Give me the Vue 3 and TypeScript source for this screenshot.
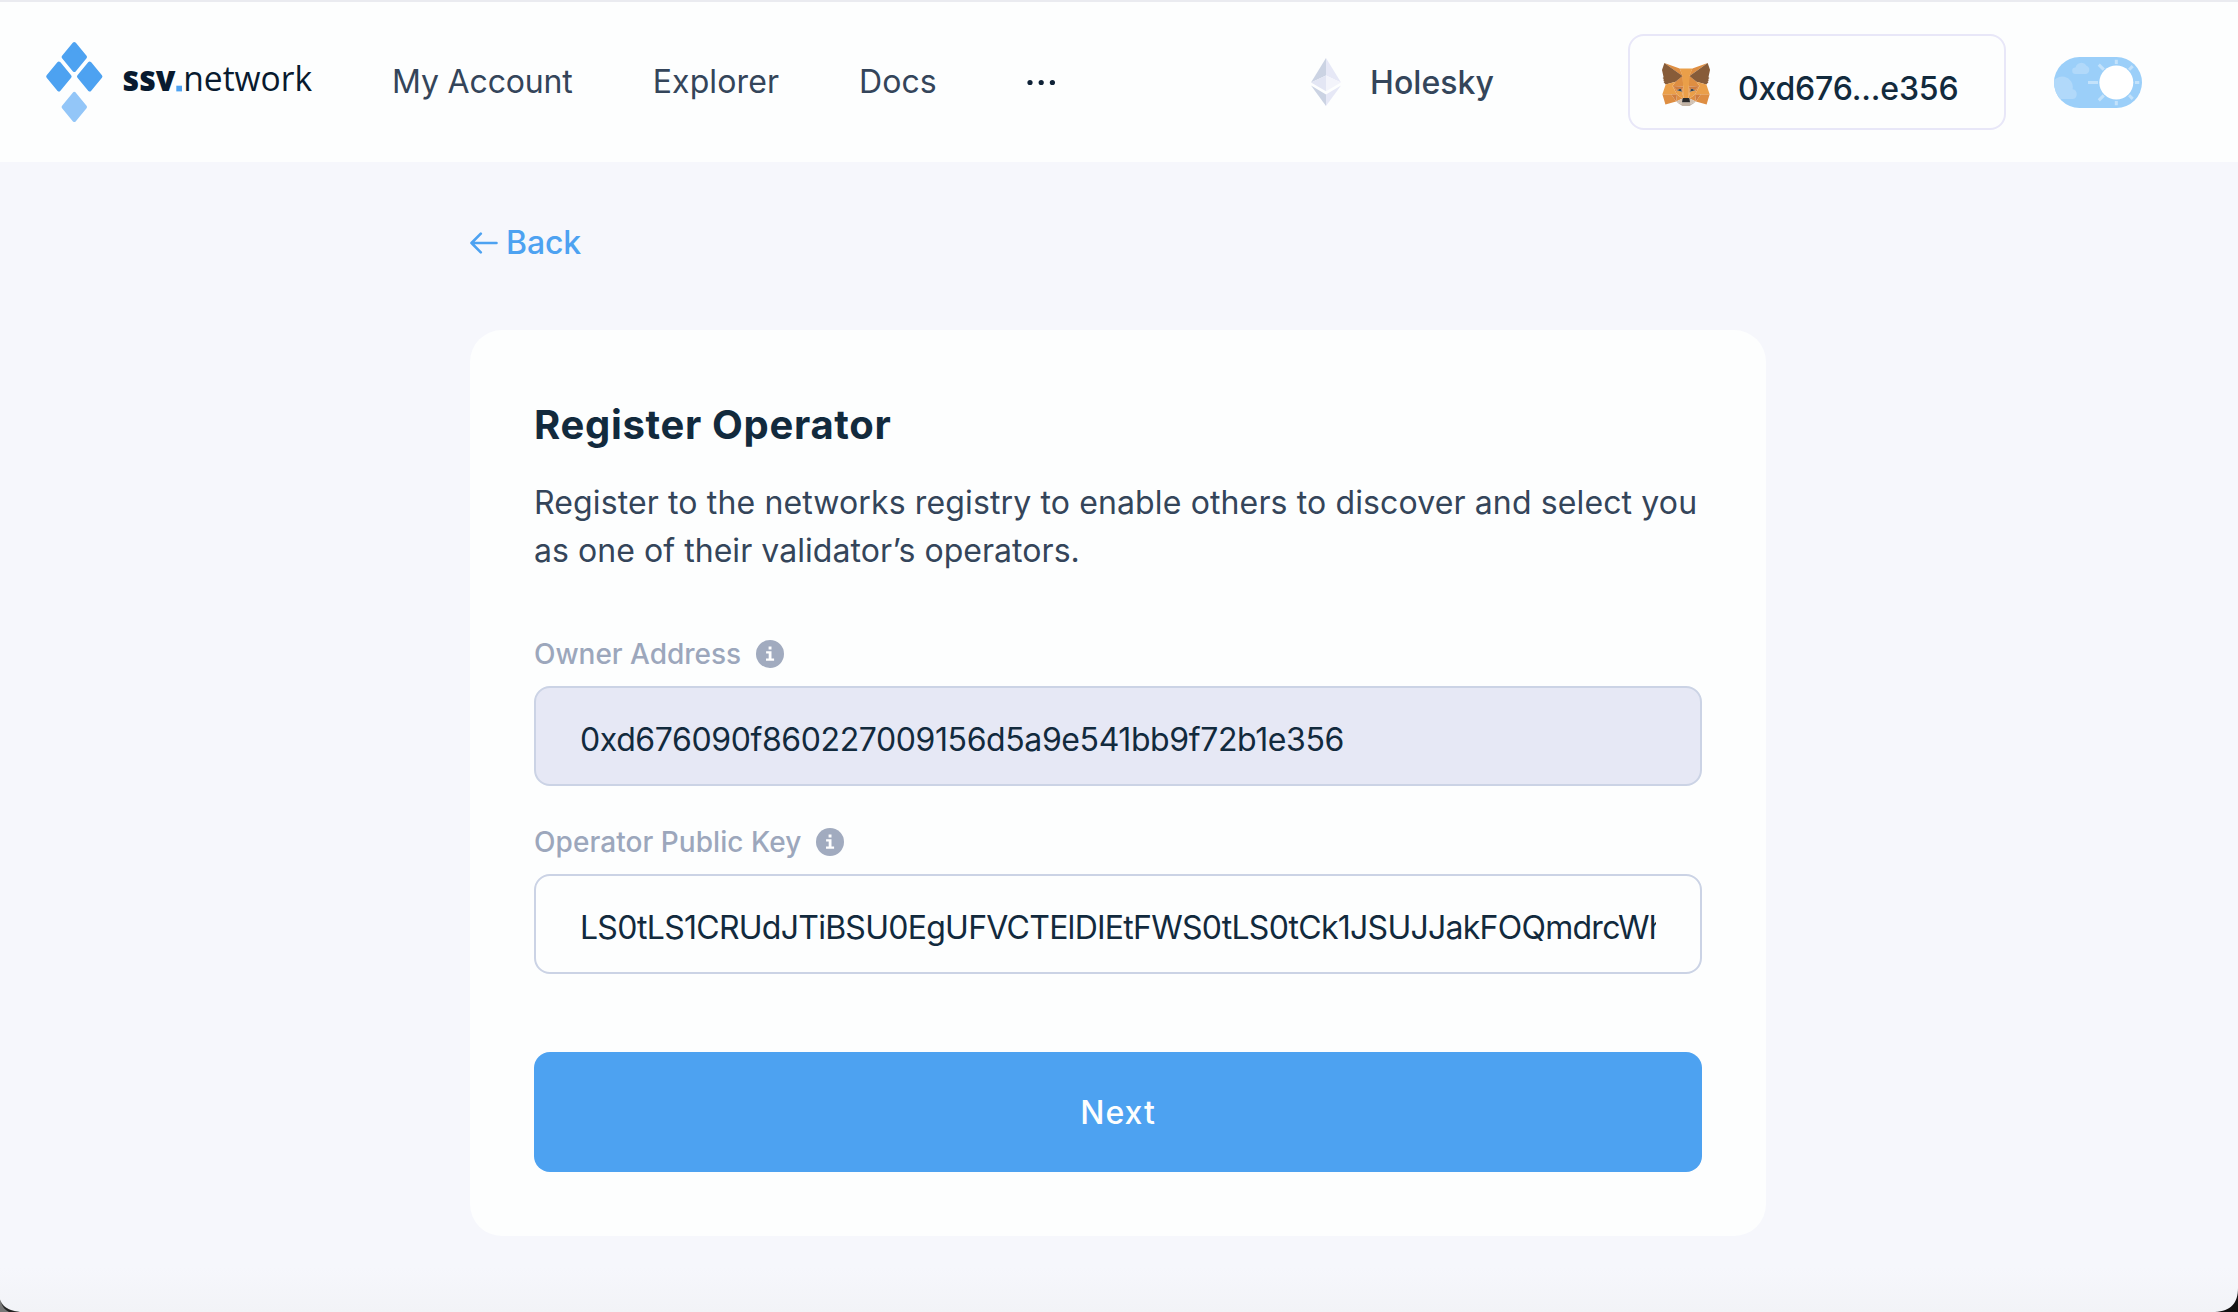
<script setup lang="ts">
import { ref } from 'vue'

interface Shape { d: string; fill: string }

const navItems: { label: string; spacing: string }[] = [
  { label: 'My Account', spacing: '-0.15px' },
  { label: 'Explorer', spacing: '0.12px' },
  { label: 'Docs', spacing: '0.05px' },
]

const ownerAddress = ref('0xd676090f860227009156d5a9e541bb9f72b1e356')
const publicKey = ref('LS0tLS1CRUdJTiBSU0EgUFVCTElDIEtFWS0tLS0tCk1JSUJJakFOQmdrcWhraUc5dzBCQVFFRkFBT0NBUThB')

const fox: Shape[] = [
  { fill: '#de8e42', d: 'M32.96 1l-13.14 9.72 2.45-5.73L32.96 1z M2.66 1l13.02 9.81L13.35 4.99 2.66 1z M28.23 23.53l-3.49 5.34 7.48 2.06 2.14-7.28-6.13-.12z M1.27 23.65l2.13 7.28 7.47-2.06-3.48-5.34-6.12.12z M10.47 14.51l-2.08 3.14 7.4.34-.25-7.97-5.07 4.49z M25.15 14.51l-5.16-4.58-.17 8.06 7.4-.34-2.07-3.14z M10.87 28.87l4.49-2.16-3.86-3.01-.63 5.17z M20.27 26.71l4.46 2.16-.61-5.17-3.85 3.01z' },
  { fill: '#d3c3b4', d: 'M24.73 28.87l-4.46-2.16.36 2.9-.04 1.23 4.14-1.97z M10.87 28.87l4.16 1.97-.03-1.23.36-2.9-4.49 2.16z' },
  { fill: '#cf7d3f', d: 'M10.87 28.87l.65-5.34-4.13.12 3.48 5.22z M24.1 23.53l.63 5.34 3.49-5.22-4.12-.12z M27.22 17.65l-7.4.34.69 3.79 1.1-2.3 2.65 1.21 2.96-3.04z M11.38 20.69l2.63-1.21 1.1 2.3.69-3.79-7.4-.34 2.98 3.04z' },
  { fill: '#de8a3e', d: 'M8.4 17.65l3.1 6.05-.1-3.01-3-3.04z M24.26 20.69l-.12 3.01 3.1-6.05-2.98 3.04z M15.8 17.99l-.69 3.79.87 4.48.19-5.9-.37-2.37z M19.82 17.99l-.36 2.36.18 5.91.87-4.48-.69-3.79z' },
  { fill: '#ea9f49', d: 'M20.51 21.78l-.87 4.48.63.45 3.85-3.01.12-3.01-3.73 1.09z M11.38 20.69l.12 3.01 3.86 3.01.63-.45-.88-4.48-3.73-1.09z' },
  { fill: '#c2b3a4', d: 'M20.59 30.84l.04-1.23-.34-.28h-4.96l-.32.28.03 1.23-4.16-1.97 1.46 1.19 2.95 2.03h5.06l2.96-2.03 1.43-1.19-4.14 1.97z' },
  { fill: '#2b2b2b', d: 'M20.27 26.71l-.63-.45h-3.65l-.63.45-.36 2.9.32-.28h4.96l.34.28-.35-2.9z' },
  { fill: '#875c39', d: 'M33.52 11.35l1.1-5.36L32.96 1l-12.69 9.4 4.89 4.11 6.9 2 1.52-1.77-.66-.48 1.05-.96-.81-.62 1.05-.8-.69-.53z M1 5.99l1.12 5.36-.72.53 1.07.8-.8.62 1.05.96-.66.48 1.51 1.77 6.9-2 4.89-4.11L2.66 1 1 5.99z' },
  { fill: '#ea9f49', d: 'M32.06 16.52l-6.9-2 2.08 3.14-3.1 6.05 4.1-.05h6.12l-2.3-7.14z M10.47 14.52l-6.9 2-2.3 7.14h6.11l4.1.05-3.1-6.05 2.09-3.14z M19.82 17.99l.43-7.6 2.01-5.4h-8.91l1.99 5.4.46 7.6.16 2.38.02 5.89h3.65l.03-5.89.16-2.38z' },
  { fill: '#35424e', d: 'M15.11 21.78l-3.73-1.09 2.63-1.21 1.1 2.3z M20.51 21.78l1.1-2.3 2.65 1.21-3.75 1.09z' },
]
</script>

<template>
  <div class="page">
    <header class="header">
      <svg class="logo" width="270" height="80" viewBox="0 0 270 80" role="img" aria-label="ssv.network">
        <g fill="#4da2f1" stroke="#4da2f1" stroke-width="4" stroke-linejoin="round">
          <path d="M28.3 2 39 15 28.3 28 17.600 15z" />
          <path d="M12.900 21.500 23.600 34.500 12.900 47.500 2.200 34.500z" />
          <path d="M43.700 21.500 54.400 34.500 43.700 47.500 33 34.500z" />
        </g>
        <path d="M28.3 51.9 39 64.9 28.3 77.9 17.600 64.9z" fill="#93c6f8" stroke="#93c6f8" stroke-width="4" stroke-linejoin="round" />
        <text class="logo-bold" x="76.5" y="49" textLength="53" lengthAdjust="spacingAndGlyphs">ssv</text>
        <rect x="130.3" y="43.7" width="5.700" height="5.700" fill="#4da2f1" />
        <text class="logo-light" x="137.2" y="49" textLength="129" lengthAdjust="spacingAndGlyphs">network</text>
      </svg>

      <nav class="nav">
        <a v-for="item in navItems" :key="item.label" :style="{ letterSpacing: item.spacing }">{{ item.label }}</a>
        <svg width="48" height="48" viewBox="0 0 48 48" fill="#0f2237">
          <circle cx="13" cy="24.500" r="2.600" />
          <circle cx="24.200" cy="24.500" r="2.600" />
          <circle cx="35.400" cy="24.500" r="2.600" />
        </svg>
      </nav>

      <div class="chain">
        <svg width="30" height="48" viewBox="0 0 30 48">
          <path d="M15 0 0 24.5 15 17.5z" fill="#cbd3e3" />
          <path d="M15 0 30 24.5 15 17.5z" fill="#e6e8f6" />
          <path d="M0 24.5 15 17.5V33.3z" fill="#e3e6f4" />
          <path d="M30 24.5 15 17.5V33.3z" fill="#f3f4fb" />
          <path d="M0 27.4 15 36.4V48z" fill="#cbd3e3" />
          <path d="M30 27.4 15 36.4V48z" fill="#e6e8f6" />
        </svg>
        <span>Holesky</span>
      </div>

      <div class="wallet">
        <svg width="48" height="43" viewBox="1 1 33.6 31.1" preserveAspectRatio="none">
          <path v-for="(shape, i) in fox" :key="i" :d="shape.d" :fill="shape.fill" />
        </svg>
        <span>0xd676...e356</span>
      </div>

      <svg class="toggle" width="88" height="51" viewBox="0 0 88 51">
        <defs><clipPath id="pill"><rect width="88" height="51" rx="25.5" /></clipPath></defs>
        <g clip-path="url(#pill)">
          <rect width="88" height="51" fill="#9bcff9" />
          <path d="M21.5 17a3.3 3.3 0 0 1 0-6.6 6 6 0 0 1 11-1.6A4.3 4.3 0 0 1 32 17z" fill="#b1d9fa" />
          <path d="M-2 42V28a9.4 9.4 0 0 1 20.6 4.2 5 5 0 0 1 .2 9.8z" fill="#b1d9fa" />
          <g stroke="#c3e2fb" stroke-width="3">
            <path d="M34 25.5h10M81 25.5h4.3M62.3 2.8v4.2M62.3 44v4.2" />
            <path d="M44.8 7.6l5 5M44.8 43.4l5-5M78.7 9.1l-3.6 3.6M78.7 41.9l-3.6-3.6" />
          </g>
          <circle cx="62.3" cy="25.5" r="17" fill="#fff" />
        </g>
      </svg>
    </header>

    <main class="main">
      <a class="back">
        <svg width="28" height="22" viewBox="0 0 28 22" fill="none" stroke="#4da2f1" stroke-width="2.6" stroke-linecap="round" stroke-linejoin="round">
          <path d="M26.5 11H1.5M10.8 1.7 1.5 11l9.3 9.3" />
        </svg>
        <span>Back</span>
      </a>

      <section class="card">
        <h1>Register Operator</h1>
        <p>
          <span class="line-a">Register to the networks registry to enable others to discover and select you</span>
          <span class="line-b">as one of their validator’s operators.</span>
        </p>

        <div class="field">
          <label for="owner">Owner Address
            <svg width="28" height="28" viewBox="0 0 28 28"><circle cx="14" cy="14" r="14" fill="#a1abbf" /><path d="M12.6 6.5h2.9v2.9h-2.9zM10.1 11.3h5.4v7.2h2.6v2.3H10v-2.3h2.7v-4.9h-2.6z" fill="#fff" /></svg>
          </label>
          <input id="owner" class="input disabled" :value="ownerAddress" readonly>
        </div>

        <div class="field">
          <label class="wide" for="key">Operator Public Key
            <svg width="28" height="28" viewBox="0 0 28 28"><circle cx="14" cy="14" r="14" fill="#a1abbf" /><path d="M12.6 6.5h2.9v2.9h-2.9zM10.1 11.3h5.4v7.2h2.6v2.3H10v-2.3h2.7v-4.9h-2.6z" fill="#fff" /></svg>
          </label>
          <input id="key" v-model="publicKey" class="input key">
        </div>

        <button class="next" type="button">Next</button>
      </section>
    </main>

    <svg class="corner left" width="22" height="14" viewBox="0 0 22 14"><path d="M0 1.5C2.5 8 8 12.6 20 14H0z" fill="#777" /><path d="M1 4.5C4 9.5 8.5 12.6 20 14H9C5 12 2.5 9 1 4.5z" fill="#222" /></svg>
    <svg class="corner right" width="24" height="24" viewBox="0 0 24 24"><path d="M24 0C24 15 17 23 1 24H24z" fill="#111" /></svg>
  </div>
</template>

<style>
body { margin: 0; background: #f6f7fc; }
</style>

<style scoped>
.page {
  position: relative;
  box-sizing: border-box;
  width: 2238px;
  height: 1312px;
  overflow: hidden;
  background: linear-gradient(#f6f7fc 0, #f6f7fc 1268px, #f2f3f7 1312px);
  font-family: Inter, "Open Sans", sans-serif;
  font-size: 32px;
  color: #34455a;
}

.header {
  box-sizing: border-box;
  display: flex;
  align-items: center;
  height: 162px;
  padding: 0 96px 0 46px;
  border-top: 2px solid #eaebf0;
  background: #fdfefe;
  white-space: nowrap;
}
.logo { flex: none; overflow: visible; }
.logo-bold { font: 800 35px "Open Sans", sans-serif; fill: #081a2f; }
.logo-light { font: 400 35px "Open Sans", sans-serif; fill: #081a2f; }

.nav { display: flex; align-items: center; gap: 80px; margin-left: 76px; padding-bottom: 1px; }

.chain {
  display: flex;
  align-items: center;
  gap: 29px;
  margin-left: auto;
  margin-right: 134px;
  font-weight: 500;
  letter-spacing: 0.05px;
}

.wallet {
  box-sizing: border-box;
  display: flex;
  align-items: center;
  width: 378px;
  height: 96px;
  margin-right: 48px;
  padding: 4px 0 0 32px;
  border: 2px solid #e8e7f8;
  border-radius: 16px;
  color: #122a3d;
  font-weight: 500;
  letter-spacing: -0.16px;
}
.wallet span { padding: 9px 0 0 28px; }
.toggle { flex: none; }

.main { width: 1296px; margin: 0 auto; padding: 64px 2px 0 0; }

.back {
  display: flex;
  align-items: center;
  gap: 8px;
  height: 33px;
  margin-bottom: 71px;
  color: #4da2f1;
  font-weight: 500;
  letter-spacing: -0.1px;
}

.card {
  box-sizing: border-box;
  height: 906px;
  padding: 64px;
  border-radius: 32px;
  background: #fdfefe;
}
h1 {
  margin: 0 0 23px;
  font-size: 40px;
  font-weight: 700;
  line-height: 62px;
  letter-spacing: 0.68px;
  color: #122a3d;
}
p { margin: 0 0 63px; line-height: 48px; white-space: nowrap; }
p span { display: block; }
.line-a { letter-spacing: 0.13px; }
.line-b { letter-spacing: 0.05px; }

.field { margin-bottom: 40px; }
label {
  display: flex;
  align-items: center;
  gap: 15px;
  height: 32px;
  margin: 0 0 16px;
  color: #9ca7bc;
  font-size: 28px;
  font-weight: 500;
  letter-spacing: -0.03px;
}
label.wide { letter-spacing: 0.06px; }
.input {
  box-sizing: border-box;
  display: block;
  width: 100%;
  height: 100px;
  padding: 7px 44px 0;
  border: 2px solid #cbd3e5;
  border-radius: 16px;
  outline: none;
  background: #fdfefe;
  color: #122a3d;
  font: 400 32px Inter, sans-serif;
  letter-spacing: -0.4px;
}
.disabled { background: #e6e8f5; }
.key { letter-spacing: -0.735px; }

.next {
  display: block;
  width: 100%;
  height: 120px;
  margin-top: 78px;
  padding: 0;
  border: 0;
  border-radius: 16px;
  background: #4da2f1;
  color: #fdfefe;
  font: 500 32px Inter, sans-serif;
  letter-spacing: 1px;
}

.corner { position: absolute; bottom: 0; }
.left { left: 0; }
.right { right: 0; }
</style>
